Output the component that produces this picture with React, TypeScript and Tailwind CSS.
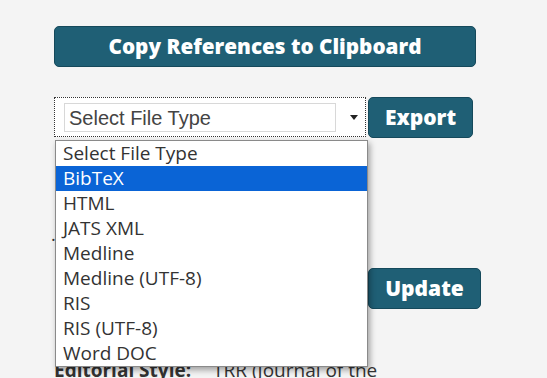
import { useState } from 'react';

const fileTypes = [
  'Select File Type',
  'BibTeX',
  'HTML',
  'JATS XML',
  'Medline',
  'Medline (UTF-8)',
  'RIS',
  'RIS (UTF-8)',
  'Word DOC',
];

export default function App() {
  const [active] = useState(1);

  return (
    <div className="relative w-[547px] h-[378px] overflow-hidden bg-[#f4f4f4] pl-[54px] pt-[26px] font-['Open_Sans',sans-serif]">
      <button className="w-[422px] h-[41px] rounded-[5px] border border-[#15495b] bg-[#1f5f75] text-[20.7px] font-extrabold leading-none text-white">
        Copy References to Clipboard
      </button>

      {/* Export row */}
      <div className="mt-[30px] flex items-start gap-[2px]">
        <div className="relative flex h-[40px] w-[312px] items-center border border-dotted border-[#333] bg-white pl-[9px]">
          <div className="flex h-[29px] w-[272px] items-center border border-[#d8d8d8] bg-white pl-[4px] pt-[1px] font-['Liberation_Sans',sans-serif] text-[20px] text-[#444]">
            Select File Type
          </div>
          <div className="ml-[14px] h-0 w-0 border-x-[4px] border-t-[5px] border-x-transparent border-t-[#222]" />
        </div>
        <button className="h-[41px] w-[105px] rounded-[5px] border border-[#15495b] bg-[#1f5f75] text-[21px] font-extrabold leading-none text-white">
          Export
        </button>
      </div>

      {/* Content behind the open list */}
      <div className="mt-[87px] flex items-start">
        <span className="-ml-[3px] text-[18px] leading-none text-[#333]">.</span>
      </div>
      <div className="mt-[25px] flex">
        <div className="w-[314px]" />
        <button className="h-[41px] w-[113px] rounded-[5px] border border-[#15495b] bg-[#1f5f75] text-[21px] font-extrabold leading-none text-white">
          Update
        </button>
      </div>
      <div className="mt-[52px] flex items-baseline gap-[22px] text-[19px] leading-none text-[#333]">
        <span className="font-bold">Editorial Style:</span>
        <span>TRR (Journal of the</span>
      </div>

      {/* Open dropdown list */}
      <ul className="absolute left-[55px] top-[140px] w-[313px] border border-[#8a8a8a] bg-white shadow-[2px_3px_6px_rgba(0,0,0,0.35)]">
        {fileTypes.map((t, i) => (
          <li
            key={t}
            className={
              i === active
                ? 'flex h-[25px] items-center bg-[#0a64d6] pl-[7px] text-[19px] text-white'
                : 'flex h-[25px] items-center pl-[7px] text-[19px] text-[#333]'
            }
          >
            {t}
          </li>
        ))}
      </ul>
    </div>
  );
}
